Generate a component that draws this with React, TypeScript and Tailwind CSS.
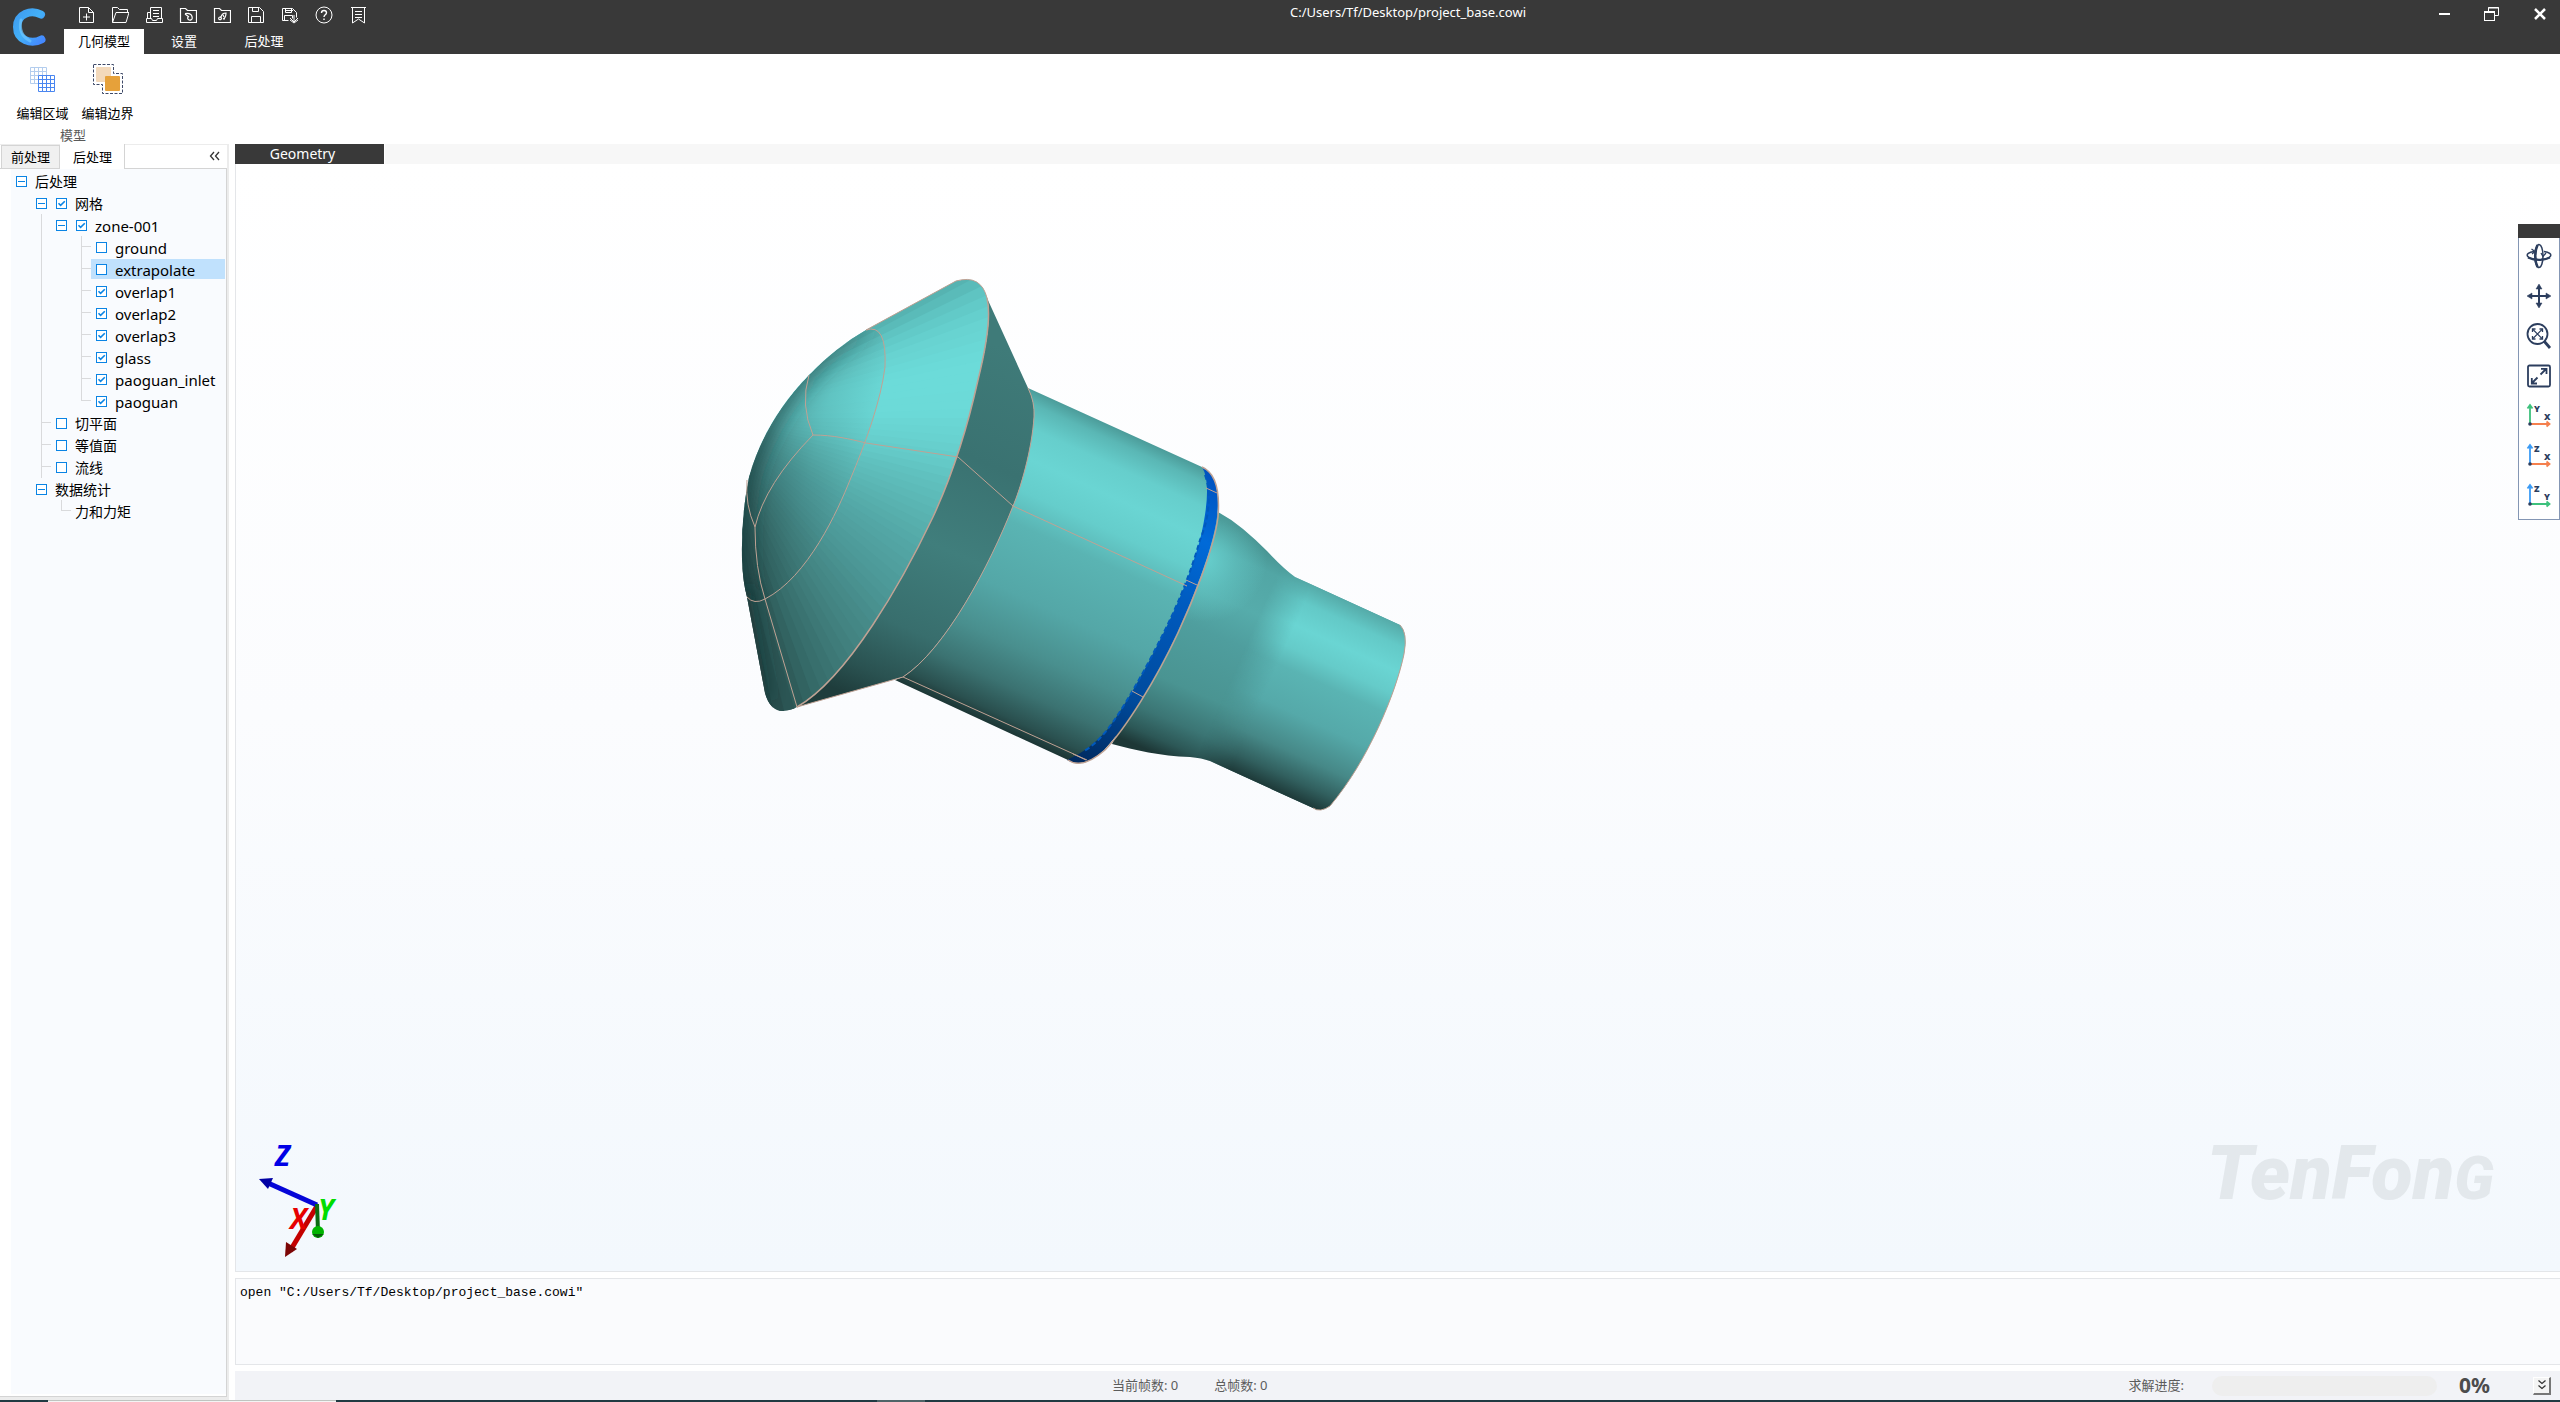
import React, { useState } from 'react';

type Guide = 'blank' | 'line' | 'tee' | 'elbow';

interface TreeRow {
  id: string;
  label: string;
  guides: Guide[];
  expander?: boolean;
  checkable?: boolean;
}

const ROWS: TreeRow[] = [
  { id: 'post', label: '后处理', guides: [], expander: true },
  { id: 'mesh', label: '网格', guides: ['blank'], expander: true, checkable: true },
  { id: 'zone-001', label: 'zone-001', guides: ['blank', 'line'], expander: true, checkable: true },
  { id: 'ground', label: 'ground', guides: ['blank', 'line', 'blank', 'tee'], checkable: true },
  { id: 'extrapolate', label: 'extrapolate', guides: ['blank', 'line', 'blank', 'tee'], checkable: true },
  { id: 'overlap1', label: 'overlap1', guides: ['blank', 'line', 'blank', 'tee'], checkable: true },
  { id: 'overlap2', label: 'overlap2', guides: ['blank', 'line', 'blank', 'tee'], checkable: true },
  { id: 'overlap3', label: 'overlap3', guides: ['blank', 'line', 'blank', 'tee'], checkable: true },
  { id: 'glass', label: 'glass', guides: ['blank', 'line', 'blank', 'tee'], checkable: true },
  { id: 'paoguan_inlet', label: 'paoguan_inlet', guides: ['blank', 'line', 'blank', 'tee'], checkable: true },
  { id: 'paoguan', label: 'paoguan', guides: ['blank', 'line', 'blank', 'elbow'], checkable: true },
  { id: 'slice', label: '切平面', guides: ['blank', 'tee'], checkable: true },
  { id: 'iso', label: '等值面', guides: ['blank', 'tee'], checkable: true },
  { id: 'stream', label: '流线', guides: ['blank', 'tee'], checkable: true },
  { id: 'stats', label: '数据统计', guides: ['blank'], expander: true },
  { id: 'force', label: '力和力矩', guides: ['blank', 'blank', 'elbow'] },
];

const CHECKED = ['mesh', 'zone-001', 'overlap1', 'overlap2', 'overlap3', 'glass', 'paoguan_inlet', 'paoguan'];

/* ---------- title bar ---------- */

const QUICK_ICONS: { name: string; art: React.ReactNode }[] = [
  {
    name: '新建',
    art: <path d="M2.5 1.5h9l5 5v10h-14zM11.5 1.5v5h5M9.5 7.500v7M6 11h7" />,
  },
  {
    name: '打开',
    art: <path d="M1.5 16.5v-15h5l2 2h8v3M1.5 16.5l3.5-10h13l-3 10z" />,
  },
  {
    name: '导入',
    art: <path d="M5.5 12v-10.5h11v11M8 4.5h6M8 7.5h6M8 10.5h6M5.5 6.5h-3v6M1.5 12.5h5l1 2h4l1-2h5v4h-16z" />,
  },
  {
    name: '导入几何',
    art: <path d="M1.5 16.5v-14h5l2 2h9v12zM6 7.500q6-1 7 3t-3 3.500q-2-1-1-3M6 8l4 3M10 14l2 .5" strokeWidth="1.200" />,
  },
  {
    name: '导出几何',
    art: <path d="M1.5 16.5v-14h5l2 2h9v12zM6 13.500q-1-2 1-2.500l1.500 1q0 2-2.500 1.500M8 11q1-4 5-4q0 5-3 6h2M10 9l1 2" strokeWidth="1.200" />,
  },
  {
    name: '保存',
    art: <path d="M1.5 1.5h11l4 4v11h-15zM5.5 1.5v4h6v-4M4.5 16.5v-6h9v6" />,
  },
  {
    name: '另存为',
    art: <path d="M1.5 14.5v-12h10l4 4v5M4.5 2.5v4h6v-4M3.5 14.5v-5h8v3M1.5 14.5h6M5 4.5h7M13 9v7M9 12l4 4l4-4M9 14l4 3l4-3" />,
  },
  {
    name: '帮助',
    art: (
      <>
        <circle cx="9" cy="9" r="8" />
        <path d="M6.5 7q0-2.500 2.500-2.500t2.500 2.300q0 1.200-1.500 2.200q-1 .8-1 2M9 12.500v1.500" strokeWidth="1.4" />
      </>
    ),
  },
  {
    name: '日志',
    art: <path d="M2 1.5h15M3.5 1.5v15.500l6-4l6 4v-15.500M6 5.5h7M6 8.5h7M6 11.5h7" />,
  },
];

const TitleBar: React.FC = () => {
  const [tab, setTab] = useState('几何模型');

  return (
    <header className="grid h-[54px] shrink-0 grid-cols-[1fr_auto_1fr] bg-[#393939] text-white">
      <div className="flex">
        <div className="flex w-16 items-center justify-center pr-[6px]">
          <svg width="36" height="40" viewBox="0 0 36 40" fill="none" strokeLinecap="round">
            <defs>
              <linearGradient id="logo" x1="0" y1="0" x2="1" y2="1">
                <stop offset="0" stopColor="#3f9df0" />
                <stop offset="0.5" stopColor="#43b0f8" />
                <stop offset="1" stopColor="#4489ff" />
              </linearGradient>
            </defs>
            <path d="M30 7.500C20 2 6 7 6 20s14 18 24.500 12.500" stroke="url(#logo)" strokeWidth="8" />
            <path d="M10 13C8 22 10 29 19 34" stroke="#6cc6ff" strokeWidth="3" opacity="0.7" />
          </svg>
        </div>
        <div className="flex flex-col justify-between">
          <div className="flex gap-4 pt-[6px] pl-[13px]">
            {QUICK_ICONS.map(({ name, art }) => (
              <button key={name} type="button" aria-label={name} className="h-[18px] w-[18px]">
                <svg width="18" height="18" viewBox="0 0 18 18" fill="none" stroke="white" strokeWidth="1">
                  {art}
                </svg>
              </button>
            ))}
          </div>
          <nav className="flex">
            {['几何模型', '设置', '后处理'].map(name => (
              <button
                key={name}
                type="button"
                onClick={() => setTab(name)}
                className={`h-[25px] w-20 text-[13px] leading-[25px] ${
                  tab === name ? 'bg-white text-black' : 'text-white'
                }`}
              >
                {name}
              </button>
            ))}
          </nav>
        </div>
      </div>
      <div className="pl-64 text-[13px] leading-6">C:/Users/Tf/Desktop/project_base.cowi</div>
      <div className="flex h-[27px] items-center justify-end gap-8 pr-3">
        <button type="button" aria-label="最小化" className="flex h-4 w-4 items-center justify-center">
          <span className="h-[2px] w-[11px] bg-white" />
        </button>
        <button type="button" aria-label="还原">
          <svg width="16" height="16" viewBox="0 0 16 16" fill="none" stroke="white">
            <path d="M4.5 5V1.5h10v8h-4M4 2h11" />
            <rect x="0.5" y="5.5" width="10" height="9" />
            <path d="M0 6h11" strokeWidth="2" />
          </svg>
        </button>
        <button type="button" aria-label="关闭">
          <svg width="16" height="16" viewBox="0 0 16 16" stroke="white" strokeWidth="2.5">
            <path d="M3 3l10 10M13 3L3 13" />
          </svg>
        </button>
      </div>
    </header>
  );
};

/* ---------- ribbon ---------- */

const Ribbon: React.FC = () => (
  <section className="flex h-[90px] shrink-0 bg-white pl-[10px]">
    <div className="flex flex-col items-center">
      <div className="flex">
        <button type="button" className="flex w-[65px] flex-col items-center pt-[9px]">
          <svg width="32" height="32" viewBox="0 0 32 32" fill="none">
            <path
              d="M3.500 4.500h16v16h-16zM7.500 4.500v16M11.500 4.500v16M15.500 4.500v16M3.500 8.500h16M3.500 12.500h16M3.500 16.500h16"
              stroke="#b3cdee"
            />
            <rect x="11" y="12" width="17" height="17" fill="white" />
            <path
              d="M11.500 12.500h16v16h-16zM15.500 12.500v16M19.500 12.500v16M23.500 12.500v16M11.500 16.500h16M11.500 20.500h16M11.500 24.500h16"
              stroke="#4a86f0"
            />
          </svg>
          <span className="mt-2 text-[13px] leading-5">编辑区域</span>
        </button>
        <button type="button" className="flex w-[65px] flex-col items-center pt-[9px]">
          <svg width="32" height="32" viewBox="0 0 32 32" fill="none">
            <path d="M1.500 1.500h20v9h9v20h-20v-9h-9z" stroke="#3f4a68" strokeDasharray="3 1.500" />
            <rect x="4" y="4" width="15" height="15" rx="1" fill="#f3d9bb" />
            <rect x="13" y="13" width="15" height="15" rx="1" fill="#e6a13a" />
          </svg>
          <span className="mt-2 text-[13px] leading-5">编辑边界</span>
        </button>
      </div>
      <span className="mt-[2px] pr-1 text-[13px] leading-5 text-[#5a5a5a]">模型</span>
    </div>
  </section>
);

/* ---------- tree panel ---------- */

const GuideCell: React.FC<{ kind: Guide }> = ({ kind }) => (
  <span className="flex h-full w-5 shrink-0 justify-end">
    {kind !== 'blank' && (
      <span className="flex h-full w-[10px] flex-col">
        <span
          className={`h-1/2 border-[#d9dadc] ${kind === 'line' ? 'border-l' : 'border-b border-l'}`}
        />
        <span className={`h-1/2 border-[#d9dadc] ${kind === 'elbow' ? '' : 'border-l'}`} />
      </span>
    )}
  </span>
);

const CheckBox: React.FC<{ id: string; checked: boolean; onChange: () => void }> = ({ id, checked, onChange }) => (
  <span className="flex w-5 shrink-0 items-center justify-center">
    <span className="relative h-[11px] w-[11px]">
      <input
        id={id}
        type="checkbox"
        checked={checked}
        onChange={onChange}
        className="block h-[11px] w-[11px] appearance-none border border-[#0a84e4] bg-white"
      />
      {checked && (
        <svg className="pointer-events-none absolute inset-0" width="11" height="11" viewBox="0 0 11 11" fill="none">
          <path d="M2.500 5.300L4.600 7.400L8.800 3.200" stroke="#0a84e4" strokeWidth="1.6" />
        </svg>
      )}
    </span>
  </span>
);

const TreePanel: React.FC = () => {
  const [checked, setChecked] = useState<string[]>(CHECKED);
  const [selected, setSelected] = useState('extrapolate');

  const toggle = (id: string) => {
    setChecked(prev => (prev.includes(id) ? prev.filter(c => c !== id) : [...prev, id]));
  };

  return (
    <aside className="flex w-[229px] shrink-0 flex-col border-t border-r-2 border-b-[3px] border-[#ececec]">
      <div className="flex h-6 items-end border-b border-[#d4d4d4] pl-px">
        <button type="button" className="h-[23px] w-[59px] border border-b-0 border-[#d4d4d4] bg-[#f0f0f0] text-[13px] leading-[22px]">
          前处理
        </button>
        <button type="button" className="-mb-px h-[25px] w-[65px] border-r border-[#d4d4d4] bg-white pl-px text-[13px] leading-6">
          后处理
        </button>
        <button type="button" aria-label="收起" className="ml-auto flex h-6 w-6 items-center justify-center">
          <svg width="12" height="10" viewBox="0 0 12 10" fill="none" stroke="#333" strokeWidth="1.3">
            <path d="M5 1L1.500 5L5 9M10 1L6.500 5L10 9" />
          </svg>
        </button>
      </div>
      <div className="flex flex-1 border-r border-b border-[#d4d4d4] pb-[2px] pl-[11px]">
        <ul className="flex-1 bg-[#f9fbfe] pt-px">
          {ROWS.map(row => (
            <li key={row.id} className="flex h-[22px]" onClick={() => setSelected(row.id)}>
              {row.guides.map((kind, i) => (
                <GuideCell key={i} kind={kind} />
              ))}
              {row.expander && (
                <span className="flex w-5 shrink-0 items-center justify-center">
                  <button
                    type="button"
                    aria-label={`折叠 ${row.label}`}
                    className="flex h-[11px] w-[11px] items-center justify-center border border-[#0a84e4] bg-white"
                  >
                    <span className="h-px w-[7px] bg-[#0a84e4]" />
                  </button>
                </span>
              )}
              <span
                className={`flex h-5 flex-1 self-center ${selected === row.id ? 'mr-px bg-[#c0e1fd]' : ''}`}
              >
                {row.checkable ? (
                  <>
                    <CheckBox id={row.id} checked={checked.includes(row.id)} onChange={() => toggle(row.id)} />
                    <label
                      htmlFor={row.id}
                      className={`pl-1 leading-[22px] text-black ${
                        /^[\w-]+$/.test(row.label) ? 'text-[15px]' : 'text-[14px]'
                      }`}
                    >
                      {row.label}
                    </label>
                  </>
                ) : (
                  <span className="pl-1 text-[14px] leading-[22px] text-black">{row.label}</span>
                )}
              </span>
            </li>
          ))}
        </ul>
      </div>
    </aside>
  );
};

/* ---------- 3D model ---------- */

// shade of the front cone by angle (degrees) around its apex
const CONE_STOPS: [number, number[]][] = [
  [-33, [80, 168, 166]],
  [-28, [88, 182, 180]],
  [-24, [97, 200, 198]],
  [-19, [104, 211, 209]],
  [-12, [108, 219, 217]],
  [-2, [108, 218, 216]],
  [8, [102, 206, 204]],
  [18, [94, 188, 186]],
  [30, [85, 170, 169]],
  [45, [76, 151, 150]],
  [58, [66, 130, 128]],
  [68, [55, 109, 107]],
  [74, [45, 88, 87]],
  [82, [31, 60, 60]],
];

const APEX = { x: 711, y: 418 };

const coneColor = (deg: number) => {
  const i = Math.max(1, CONE_STOPS.findIndex(([a]) => a >= deg));
  const [a0, c0] = CONE_STOPS[i - 1];
  const [a1, c1] = CONE_STOPS[i];
  const t = (deg - a0) / (a1 - a0);
  return `rgb(${c0.map((v, k) => Math.round(v + (c1[k] - v) * t)).join(',')})`;
};

const STEP = 2;
const WEDGES = Array.from({ length: 56 }, (_, i) => {
  const a = -32 + i * STEP;
  const pt = (deg: number) => {
    const r = (deg * Math.PI) / 180;
    return `${APEX.x + Math.cos(r) * 420},${APEX.y + Math.sin(r) * 420}`;
  };
  return { points: `${APEX.x},${APEX.y} ${pt(a)} ${pt(a + STEP + 1)}`, color: coneColor(a + STEP / 2) };
});

const FRONT =
  'M956 281L866 330Q836 347 809 375Q765 420 749 477Q741 515 742 560Q743 583 747 597L765 693Q770 711 783 711Q792 710 797 707C848 678 903 580 933 517C950 480 967 430 978 380C988 340 991 315 987 298Q981 274 956 281Z';
const DOME =
  'M866 330Q836 347 809 375Q765 420 749 477Q741 515 742 560Q743 583 747 597Q754 605 765 599C808 577 838 510 850 480C866 442 881 400 885 367Q887 323 866 330Z';
const BACK =
  'M987 298L1028 388Q1035 402 1034 417C1032 450 1020 490 1013 506C990 565 945 650 903 677L797 707C848 678 903 580 933 517C950 480 967 430 978 380C988 340 991 315 987 298Z';
const BARREL =
  'M1028 388L1202 467C1216 473 1220 492 1217 517C1213 550 1190 605 1177 633C1155 680 1125 728 1104 750Q1082 770 1068 760L895 680L903 677C945 650 990 565 1013 506C1020 490 1032 450 1034 417Q1035 402 1028 388Z';
const BAND =
  'M1202 467C1216 473 1220 492 1217 517C1213 550 1190 605 1177 633C1155 680 1125 728 1104 750Q1082 770 1067 760Q1090 750 1107 730C1122 711 1144 672 1160 640C1178 605 1191 572 1200 540Q1213 485 1202 467Z';
const NOZZLE =
  'M1218 512Q1231 519 1243 529Q1255 539 1267 551Q1284 569 1295 577L1400 625Q1408 633 1404 654C1396 693 1368 761 1330 806Q1320 813 1313 808L1210 761Q1202 758 1190 757C1160 756 1135 750 1112 744Z';

const Model: React.FC = () => (
  <svg
    className="absolute top-[106px] left-[494px]"
    width="690"
    height="550"
    viewBox="730 270 690 550"
    fill="none"
    role="img"
    aria-label="zone-001"
  >
    <defs>
      <linearGradient id="barrel" gradientUnits="userSpaceOnUse" x1="1028" y1="388" x2="895" y2="680">
        <stop offset="0" stopColor="#4c9c9a" />
        <stop offset="0.04" stopColor="#5ab7b5" />
        <stop offset="0.11" stopColor="#66cecc" />
        <stop offset="0.2" stopColor="#6ad5d3" />
        <stop offset="0.3" stopColor="#65cdcb" />
        <stop offset="0.4" stopColor="#5ab4b3" />
        <stop offset="0.6" stopColor="#54a7a7" />
        <stop offset="0.75" stopColor="#498f8e" />
        <stop offset="0.87" stopColor="#3b7271" />
        <stop offset="0.96" stopColor="#2a504f" />
        <stop offset="1" stopColor="#1d3736" />
      </linearGradient>
      <linearGradient id="pipe" gradientUnits="userSpaceOnUse" x1="1295" y1="576" x2="1211" y2="760">
        <stop offset="0" stopColor="#54a9a7" />
        <stop offset="0.1" stopColor="#63c9c7" />
        <stop offset="0.22" stopColor="#6ad5d3" />
        <stop offset="0.33" stopColor="#65cbc9" />
        <stop offset="0.43" stopColor="#5ab4b3" />
        <stop offset="0.62" stopColor="#55a9a9" />
        <stop offset="0.8" stopColor="#468887" />
        <stop offset="0.92" stopColor="#315f5e" />
        <stop offset="1" stopColor="#1f3c3b" />
      </linearGradient>
      <linearGradient id="flare" gradientUnits="userSpaceOnUse" x1="1255" y1="535" x2="1160" y2="755">
        <stop offset="0" stopColor="#448c8a" />
        <stop offset="0.12" stopColor="#52a6a5" />
        <stop offset="0.3" stopColor="#56acab" />
        <stop offset="0.45" stopColor="#4f9e9e" />
        <stop offset="0.7" stopColor="#4a9492" />
        <stop offset="0.85" stopColor="#3b7574" />
        <stop offset="0.94" stopColor="#2c5756" />
        <stop offset="1" stopColor="#1d3736" />
      </linearGradient>
      <linearGradient id="pipeFade" gradientUnits="userSpaceOnUse" x1="1248" y1="640" x2="1282" y2="655">
        <stop offset="0" stopColor="black" />
        <stop offset="1" stopColor="white" />
      </linearGradient>
      <mask id="pipeMask" maskUnits="userSpaceOnUse" x="730" y="270" width="690" height="550">
        <rect x="730" y="270" width="690" height="550" fill="url(#pipeFade)" />
      </mask>
      <radialGradient id="flareGlow" gradientUnits="userSpaceOnUse" cx="1205" cy="560" r="62">
        <stop offset="0" stopColor="#69d3d1" stopOpacity="0.9" />
        <stop offset="0.5" stopColor="#69d3d1" stopOpacity="0.4" />
        <stop offset="1" stopColor="#69d3d1" stopOpacity="0" />
      </radialGradient>
      <linearGradient id="back" gradientUnits="userSpaceOnUse" x1="1010" y1="350" x2="862" y2="700">
        <stop offset="0" stopColor="#3f7b79" />
        <stop offset="0.3" stopColor="#3a7271" />
        <stop offset="0.55" stopColor="#407e7c" />
        <stop offset="0.78" stopColor="#386e6d" />
        <stop offset="0.92" stopColor="#2a5251" />
        <stop offset="1" stopColor="#1f3d3c" />
      </linearGradient>
      <linearGradient id="band" gradientUnits="userSpaceOnUse" x1="1210" y1="475" x2="1080" y2="762">
        <stop offset="0" stopColor="#0053c0" />
        <stop offset="0.2" stopColor="#006ad8" />
        <stop offset="0.45" stopColor="#0058ba" />
        <stop offset="0.75" stopColor="#004a9c" />
        <stop offset="1" stopColor="#002a60" />
      </linearGradient>
      <linearGradient id="domeShade" gradientUnits="userSpaceOnUse" x1="757" y1="440" x2="872" y2="470">
        <stop offset="0" stopColor="#1d3f3f" stopOpacity="0.4" />
        <stop offset="0.5" stopColor="#1d3f3f" stopOpacity="0.15" />
        <stop offset="1" stopColor="#1d3f3f" stopOpacity="0" />
      </linearGradient>
      {/* rim shadow dies out towards the top of the dome */}
      <linearGradient id="rimShade" gradientUnits="userSpaceOnUse" x1="745" y1="520" x2="880" y2="320">
        <stop offset="0" stopColor="#1d4040" stopOpacity="0.7" />
        <stop offset="0.5" stopColor="#1d4040" stopOpacity="0.55" />
        <stop offset="0.85" stopColor="#1d4040" stopOpacity="0.25" />
        <stop offset="1" stopColor="#1d4040" stopOpacity="0" />
      </linearGradient>
      <filter id="soft" filterUnits="userSpaceOnUse" x="700" y="240" width="740" height="600">
        <feGaussianBlur stdDeviation="9" />
      </filter>
      <clipPath id="frontClip">
        <path d={FRONT} />
      </clipPath>
      <clipPath id="domeClip">
        <path d={DOME} />
      </clipPath>
    </defs>

    {/* outlet pipe */}
    <path d={NOZZLE} fill="url(#flare)" />
    <path d={NOZZLE} fill="url(#flareGlow)" />
    <path d={NOZZLE} fill="url(#pipe)" mask="url(#pipeMask)" />

    {/* barrel and the blue seal */}
    <path d={BARREL} fill="url(#barrel)" />
    <path d={BAND} fill="url(#band)" />
    <path
      d="M1205 475C1214 500 1205 528 1200 540C1191 572 1178 605 1160 640C1144 672 1122 711 1107 730Q1095 745 1084 751"
      stroke="#0059bd"
      strokeWidth="2"
      strokeDasharray="5 3"
    />

    <path d={BACK} fill="url(#back)" />

    {/* front cone and dome */}
    <g clipPath="url(#frontClip)">
      {WEDGES.map(w => (
        <polygon key={w.points} points={w.points} fill={w.color} />
      ))}
      <g clipPath="url(#domeClip)">
        <path d={DOME} fill="url(#domeShade)" />
        <path
          d="M872 322Q836 343 806 372Q762 418 745 477Q737 515 738 560Q739 590 750 610"
          stroke="url(#rimShade)"
          strokeWidth="22"
          filter="url(#soft)"
        />
      </g>
      <path d="M745 590L763 700" stroke="#163030" strokeOpacity="0.5" strokeWidth="14" filter="url(#soft)" />
    </g>

    {/* feature edges */}
    <g stroke="#bfa294">
      <path d="M866 330Q887 323 885 367C881 400 866 442 850 480C838 510 808 577 765 599Q754 605 747 597" />
      <path d="M809 375Q800 405 813 435C833 435 850 439 866 443L958 457L1013 506L1187 586" />
      <path d="M813 435Q765 484 755 527Q755 568 765 599L797 707" />
      <path d="M747 480Q745 505 755 527" />
      <path d="M797 707C848 678 903 580 933 517C950 480 967 430 978 380C988 340 991 315 987 298" strokeWidth="1.5" />
      <path d="M1028 388Q1035 402 1034 417C1032 450 1020 490 1013 506C990 565 945 650 903 677L797 707" />
      <path d="M866 330L956 281Q981 274 987 298" />
      <path d="M903 677L1087 760M1073 754L1086 760" />
      <path d="M1206 488L1217 493M1186 580L1197 585M1132 691L1143 697" />
      <path
        d="M1202 467C1216 473 1220 492 1218 517C1214 550 1191 605 1178 633C1156 680 1126 728 1105 750Q1082 770 1068 760"
        strokeWidth="1.5"
      />
      <path d="M1400 625Q1408 633 1404 654C1396 693 1368 761 1330 806Q1320 813 1313 808" />
    </g>
  </svg>
);

const AxisTriad: React.FC = () => (
  <svg
    className="absolute bottom-[10px] left-[18px]"
    width="100"
    height="124"
    viewBox="254 1136 100 124"
    fontFamily="'Open Sans', 'Noto Sans', sans-serif"
    fontSize="28"
    fontWeight="700"
    fontStyle="italic"
  >
    <path d="M317 1205L290 1250" stroke="#c40000" strokeWidth="5" />
    <path d="M285 1256L286 1241L297 1248Z" fill="#7c0505" />
    <path d="M317 1204L268 1182" stroke="#0505d8" strokeWidth="5" />
    <path d="M259 1178L273 1177L268 1188Z" fill="#0000a4" />
    <path d="M317 1203L318 1230" stroke="#0a6a12" strokeWidth="4" />
    <circle cx="318" cy="1231" r="6" fill="#00b400" />
    <path d="M312 1233L318 1237L324 1233Z" fill="#065a0a" />
    <text x="275" y="1165" fill="#0000e6">Z</text>
    <text x="290" y="1228" fill="#e60000">X</text>
    <text x="318" y="1219" fill="#00dc00">Y</text>
  </svg>
);

/* ---------- view toolbar ---------- */

const NAVY = '#2c3e5e';

const PlaneIcon: React.FC<{ up: string; right: string; upColor: string; rightColor: string }> = ({
  up,
  right,
  upColor,
  rightColor,
}) => (
  <svg
    width="26"
    height="26"
    viewBox="0 0 26 26"
    fill="none"
    fontFamily="'Open Sans', 'Noto Sans', sans-serif"
    fontSize="9"
    fontWeight="800"
  >
    <path d="M4 21V3M1.500 5.500L4 2L6.500 5.500" stroke={upColor} strokeWidth="1.8" />
    <path d="M4 21H23M20.500 18.500L23.500 21L20.500 23.500" stroke={rightColor} strokeWidth="1.8" />
    <circle cx="4" cy="21" r="1.8" fill={NAVY} />
    <text x="8" y="9" fill={NAVY}>{up}</text>
    <text x="18" y="17" fill={NAVY}>{right}</text>
  </svg>
);

const VIEW_TOOLS: { name: string; art: React.ReactNode }[] = [
  {
    name: '旋转',
    art: (
      <svg width="26" height="26" viewBox="0 0 26 26" fill="none" stroke={NAVY}>
        <ellipse cx="13" cy="13" rx="4" ry="11.500" strokeWidth="1.5" />
        <path d="M11.500 2C8.500 8 8.500 18 11.500 24" strokeWidth="2.6" />
        <path d="M8 8.500C-3 10 0 16.500 13 16.500S29 10 18 8.500" strokeWidth="1.5" />
        <path d="M2 14.500Q13 19.500 24 14.500" strokeWidth="2.2" />
        <path d="M5.500 6L9 8.500L6 11M20 10L17 13.500L15 10" strokeWidth="1.3" />
      </svg>
    ),
  },
  {
    name: '平移',
    art: (
      <svg width="26" height="26" viewBox="0 0 26 26" fill={NAVY} stroke={NAVY}>
        <path d="M13 3V23M3 13H23" strokeWidth="2" />
        <path d="M13 1L16 6H10ZM13 25L16 20H10ZM1 13L6 10V16ZM25 13L20 10V16Z" strokeWidth="0.5" />
      </svg>
    ),
  },
  {
    name: '缩放',
    art: (
      <svg width="26" height="26" viewBox="0 0 26 26" fill="none" stroke={NAVY}>
        <circle cx="11.500" cy="11" r="10" strokeWidth="1.8" />
        <path d="M18 18L24 25" strokeWidth="2.8" />
        <path d="M7 6.500L16 15.500M16 6.500L7 15.500" strokeWidth="1.1" />
        <path d="M6.500 9V6H9.500M13.500 6H16.500V9M16.500 13V16H13.500M9.500 16H6.500V13" strokeWidth="1.3" />
      </svg>
    ),
  },
  {
    name: '适应窗口',
    art: (
      <svg width="26" height="26" viewBox="0 0 26 26" fill="none" stroke={NAVY}>
        <rect x="2" y="2.500" width="22" height="21" rx="1.500" strokeWidth="1.8" />
        <path d="M14.500 11.500L20 6M15 5.800H20.500V11M11.500 14.500L6 20M5.800 15V20.500H11" strokeWidth="1.8" />
      </svg>
    ),
  },
  { name: 'XY 视图', art: <PlaneIcon up="Y" right="X" upColor="#3dc17c" rightColor="#f5804d" /> },
  { name: 'XZ 视图', art: <PlaneIcon up="Z" right="X" upColor="#3b9bf5" rightColor="#f5804d" /> },
  { name: 'YZ 视图', art: <PlaneIcon up="Z" right="Y" upColor="#3b9bf5" rightColor="#3dc17c" /> },
];

const ViewToolbar: React.FC = () => (
  <div className="absolute top-[60px] right-0 w-[42px] border border-t-0 border-[#8496b4] bg-white">
    <div className="-mx-px h-[14px] bg-[#393939]" />
    <div className="flex flex-col items-center gap-[14px] pt-[5px] pb-[10px]">
      {VIEW_TOOLS.map(({ name, art }) => (
        <button key={name} type="button" aria-label={name}>
          {art}
        </button>
      ))}
    </div>
  </div>
);

/* ---------- main area ---------- */

const Viewport: React.FC = () => (
  <div className="relative flex-1 overflow-hidden border-b border-l border-[#e4e6e9] bg-linear-to-b from-white via-[#fbfcfe] to-[#f3f8fd]">
    <Model />
    <AxisTriad />
    <div className="absolute right-[66px] bottom-[52px] font-[Roboto,sans-serif] text-[76px] leading-[80px] font-black text-[#e3e8ec] italic select-none">
      TenFon<span className="text-[60px]">G</span>
    </div>
    <ViewToolbar />
  </div>
);

const StatusBar: React.FC = () => (
  <footer className="mt-[6px] flex h-[29px] shrink-0 items-center bg-[#f2f3f7] text-[13px] text-[#5c5c5c]">
    <div className="flex flex-1 justify-center gap-9 pl-4">
      <span>当前帧数: 0</span>
      <span>总帧数: 0</span>
    </div>
    <span>求解进度:</span>
    <div
      role="progressbar"
      aria-label="求解进度"
      aria-valuenow={0}
      className="ml-7 h-5 w-[225px] rounded-full bg-[#eeeeee]"
    />
    <span className="ml-[22px] w-[74px] text-[21px] leading-[29px] font-bold text-[#4c4c4c]">0%</span>
    <button
      type="button"
      aria-label="展开"
      className="mr-[9px] flex h-[18px] w-[18px] items-center justify-center border-t border-r-2 border-b-2 border-l border-t-white border-r-[#777] border-b-[#777] border-l-white bg-[#f4f4f4]"
    >
      <svg width="10" height="12" viewBox="0 0 10 12" fill="none" stroke="#333" strokeWidth="1.3">
        <path d="M1.500 1.500L5 4.500L8.500 1.500M1.500 6.500L5 9.500L8.500 6.500" />
      </svg>
    </button>
  </footer>
);

const App: React.FC = () => (
  <div className="flex h-screen flex-col overflow-hidden bg-white font-['Noto_Sans','Noto_Sans_CJK_SC',sans-serif] text-black">
    <TitleBar />
    <Ribbon />
    <div className="flex min-h-0 flex-1">
      <TreePanel />
      <main className="ml-[6px] flex min-w-0 flex-1 flex-col">
        <div className="flex h-5 shrink-0 gap-px">
          <button type="button" className="w-[149px] bg-[#393939] pr-[14px] text-[14px] leading-5 text-white">
            Geometry
          </button>
          <div className="flex-1 bg-[#f7f7f7]" />
        </div>
        <Viewport />
        <pre className="mt-[6px] h-[87px] shrink-0 border border-r-0 border-[#e4e6e9] bg-[#fafbfd] pt-1 pl-1 font-['Liberation_Mono',monospace] text-[13px] leading-5">
          open "C:/Users/Tf/Desktop/project_base.cowi"
        </pre>
        <StatusBar />
      </main>
    </div>
    <div className="flex h-[2px] shrink-0 bg-[#203a42]">
      <span className="w-12" />
      <span className="w-[288px] border-t border-[#c0c4c0] bg-[#f4f4f4]" />
      <span className="ml-[541px] w-12 bg-[#4f6468]" />
    </div>
  </div>
);

export default App;
